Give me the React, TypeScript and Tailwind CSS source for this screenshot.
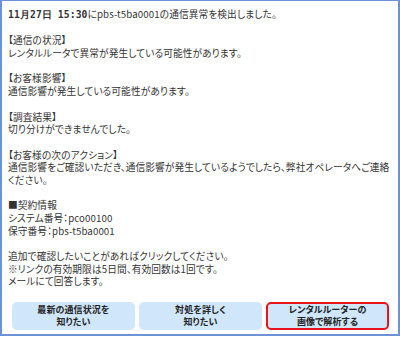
export default function App() {
  const lines = [
    "",
    "【通信の状況】",
    "レンタルルータで異常が発生している可能性があります。",
    "",
    "【お客様影響】",
    "通信影響が発生している可能性があります。",
    "",
    "【調査結果】",
    "切り分けができませんでした。",
    "",
    "【お客様の次のアクション】",
    "通信影響をご確認いただき、通信影響が発生しているようでしたら、弊社オペレータへご連絡",
    "ください。",
    "",
    "■契約情報",
    "システム番号：pco00100",
    "保守番号：pbs-t5ba0001",
    "",
    "追加で確認したいことがあればクリックしてください。",
    "※リンクの有効期限は5日間、有効回数は1回です。",
    "メールにて回答します。",
  ];

  const buttons = [
    { top: "最新の通信状況を", bottom: "知りたい", active: false },
    { top: "対処を詳しく", bottom: "知りたい", active: false },
    { top: "レンタルルーターの", bottom: "画像で解析する", active: true },
  ];

  return (
    <div className="w-[400px] h-[337px] bg-white">
      <div
        className="w-[400px] h-[336px] bg-white border-l-2 border-r-2 border-t border-b-2 border-[#6b93d6] flex flex-col text-[#333] text-[9.7px] tracking-[0.1px] leading-[12.7px]"
        style={{ fontFamily: '"Noto Sans CJK JP", sans-serif', fontFeatureSettings: '"palt"' }}
      >
        <div className="pl-[6px] pt-[7px]">
          <p className="whitespace-nowrap">
            <span className="font-bold" style={{ fontFamily: '"DejaVu Sans Mono", monospace' }}>
              11月27日 15:30
            </span>
            にpbs-t5ba0001の通信異常を検出しました。
          </p>
          {lines.map((l, i) => (
            <p key={i} className="h-[12.7px] whitespace-nowrap">
              {l}
            </p>
          ))}
        </div>
        <div className="mt-auto mb-[4px] flex gap-[4px] pl-[10px] pr-[8px]">
          {buttons.map((b, i) => (
            <div
              key={i}
              className={
                "w-[123px] h-[28px] rounded-[5px] bg-[#cfe6fb] flex flex-col items-center justify-center font-bold text-[9px] leading-[12px] text-[#222] " +
                (b.active ? "border-2 border-[#e8141c]" : "")
              }
            >
              <span>{b.top}</span>
              <span>{b.bottom}</span>
            </div>
          ))}
        </div>
      </div>
    </div>
  );
}
